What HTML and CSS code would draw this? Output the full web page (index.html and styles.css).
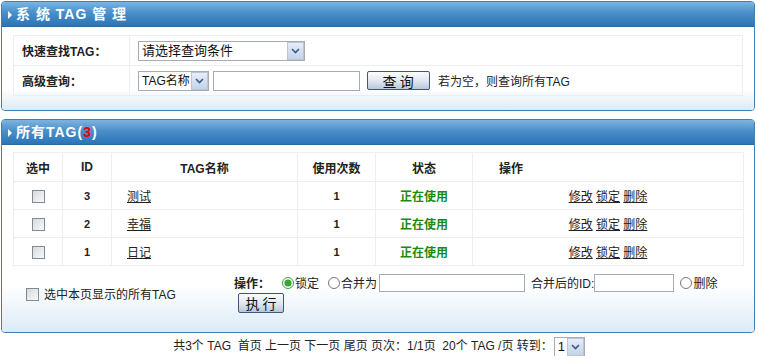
FILE: index.html
```html
<!DOCTYPE html>
<html lang="zh-CN">
<head>
    <meta charset="utf-8">
    <title>系统TAG管理</title>
    <link rel="stylesheet" href="styles.css">
</head>
<body>
    <div class="panel">
        <div class="panel-head"><span class="arrow"></span>系 统 TAG 管 理</div>
        <div class="panel-body search">
            <table class="grid">
                <tr>
                    <td class="label">快速查找TAG：</td>
                    <td>
                        <span class="sel sel-wide">
                            <select><option>请选择查询条件</option></select>
                            <span class="sel-btn"><svg width="9" height="6" viewBox="0 0 9 6"><path d="M1 1 L4.5 4.5 L8 1" fill="none" stroke="#3a5a88" stroke-width="1.6"/></svg></span>
                        </span>
                    </td>
                </tr>
                <tr>
                    <td class="label">高级查询：</td>
                    <td>
                        <span class="sel sel-small">
                            <select><option>TAG名称</option></select>
                            <span class="sel-btn"><svg width="9" height="6" viewBox="0 0 9 6"><path d="M1 1 L4.5 4.5 L8 1" fill="none" stroke="#3a5a88" stroke-width="1.6"/></svg></span>
                        </span>
                        <input type="text" class="txt txt-key">
                        <button type="button" class="btn btn-query">查 询</button>
                        <span class="hint">若为空，则查询所有TAG</span>
                    </td>
                </tr>
            </table>
        </div>
    </div>

    <div class="panel panel-last">
        <div class="panel-head"><span class="arrow"></span>所有TAG(<span class="red">3</span>)</div>
        <div class="panel-body list">
            <table class="grid tags">
                <colgroup>
                    <col class="w1"><col class="w2"><col class="w3"><col class="w4"><col class="w5"><col class="w6">
                </colgroup>
                <tr class="head">
                    <td>选中</td>
                    <td>ID</td>
                    <td>TAG名称</td>
                    <td>使用次数</td>
                    <td>状态</td>
                    <td class="op-head">操作</td>
                </tr>
                <tr>
                    <td><input type="checkbox" class="chk"></td>
                    <td class="num">3</td>
                    <td class="name"><a href="#">测试</a></td>
                    <td class="num">1</td>
                    <td class="ok">正在使用</td>
                    <td><a href="#">修改</a> <a href="#">锁定</a> <a href="#">删除</a></td>
                </tr>
                <tr>
                    <td><input type="checkbox" class="chk"></td>
                    <td class="num">2</td>
                    <td class="name"><a href="#">幸福</a></td>
                    <td class="num">1</td>
                    <td class="ok">正在使用</td>
                    <td><a href="#">修改</a> <a href="#">锁定</a> <a href="#">删除</a></td>
                </tr>
                <tr>
                    <td><input type="checkbox" class="chk"></td>
                    <td class="num">1</td>
                    <td class="name"><a href="#">日记</a></td>
                    <td class="num">1</td>
                    <td class="ok">正在使用</td>
                    <td><a href="#">修改</a> <a href="#">锁定</a> <a href="#">删除</a></td>
                </tr>
            </table>
            <div class="actions">
                <label class="all"><input type="checkbox" class="chk">选中本页显示的所有TAG</label>
                <div class="ops">
                    <div class="ops-line">
                        <b class="ops-title">操作：</b>
                        <label class="rad"><input type="radio" name="op" checked>锁定</label>
                        <label class="rad"><input type="radio" name="op">合并为</label>
                        <input type="text" class="txt txt-merge">
                        <span class="merge-id">合并后的ID:</span><input type="text" class="txt txt-id">
                        <label class="rad rad-del"><input type="radio" name="op">删除</label>
                    </div>
                    <button type="button" class="btn btn-run">执 行</button>
                </div>
            </div>
        </div>
    </div>

    <div class="pager">
        共3个 TAG&nbsp; 首页 上一页 下一页 尾页 页次：1/1页&nbsp; 20个 TAG /页 转到：<span class="sel sel-page">
            <select><option>1</option></select>
            <span class="sel-btn"><svg width="9" height="6" viewBox="0 0 9 6"><path d="M1 1 L4.5 4.5 L8 1" fill="none" stroke="#3a5a88" stroke-width="1.6"/></svg></span>
        </span>
    </div>
</body>
</html>
```

FILE: styles.css
```css
body {
    margin: 0;
    background: #fff;
    font: 12px "Liberation Sans", "Noto Sans CJK SC", sans-serif;
    color: #222;
}

.panel {
    width: 752px;
    margin: 1px 0 8px 1px;
    border: 1px solid #3f7fb2;
    border-radius: 4px;
    overflow: hidden;
}

.panel-last {
    margin-bottom: 0;
}

.panel-head {
    height: 24px;
    line-height: 24px;
    padding-left: 6px;
    background: linear-gradient(#7db4df, #4a8fca 45%, #2c74b6);
    color: #fff;
    font-weight: bold;
    font-size: 14px;
    letter-spacing: 1px;
    border-bottom: 1px solid #2a6aa3;
}

.arrow {
    display: inline-block;
    width: 0;
    height: 0;
    border-left: 4px solid #fff;
    border-top: 4px solid transparent;
    border-bottom: 4px solid transparent;
    margin-right: 4px;
    vertical-align: 0;
}

.red {
    color: #e00;
}

.panel-body {
    background: linear-gradient(#fff 75%, #dcebf7);
    padding: 8px 11px 0 11px;
}

.search {
    height: 75px;
}

.list {
    padding-top: 7px;
    height: 180px;
}

.grid {
    width: 730px;
    border-collapse: collapse;
}

.grid td {
    border: 1px solid #eceef0;
    padding: 0;
}

.search .grid td {
    height: 29px;
    padding-left: 8px;
}

.search .grid td.label {
    width: 107px;
    font-weight: bold;
    padding-left: 8px;
}

.sel {
    position: relative;
    display: inline-block;
    vertical-align: middle;
    height: 20px;
}

.sel select {
    appearance: none;
    -webkit-appearance: none;
    height: 20px;
    border: 1px solid #a5acb5;
    background: #fff;
    font: 12px "Liberation Sans", "Noto Sans CJK SC", sans-serif;
    color: #111;
    padding: 0 0 0 3px;
    margin: 0;
    border-radius: 0;
}

.sel-wide select {
    width: 167px;
    font-size: 13px;
}

.sel-small select {
    width: 71px;
}

.sel-page select {
    width: 31px;
    font-size: 13px;
}

.sel-btn {
    position: absolute;
    right: 1px;
    top: 1px;
    width: 15px;
    height: 16px;
    border: 1px solid #b8c6d8;
    background: linear-gradient(#e6eef8, #c3d3e8);
    display: flex;
    align-items: center;
    justify-content: center;
}

.txt {
    height: 18px;
    box-sizing: border-box;
    border: 1px solid #a5acb5;
    vertical-align: middle;
    margin: 0;
    padding: 0 2px;
}

.txt-key {
    width: 147px;
    height: 20px;
    margin-left: 1px;
}

.btn {
    font: 14px "Noto Sans CJK SC", sans-serif;
    color: #111;
    border: 1px solid #3d5878;
    border-radius: 2px;
    background: linear-gradient(#fbfcfe, #dfe6f0 55%, #b9c7da);
    padding: 0;
    line-height: 16px;
    vertical-align: middle;
}

.btn-query {
    width: 63px;
    height: 19px;
    margin-left: 3px;
}

.hint {
    margin-left: 5px;
    vertical-align: middle;
}

.tags {
    table-layout: fixed;
}

.tags .w1 { width: 49px; }
.tags .w2 { width: 49px; }
.tags .w3 { width: 186px; }
.tags .w4 { width: 78px; }
.tags .w5 { width: 97px; }
.tags .w6 { width: 271px; }

.tags td {
    height: 27px;
    text-align: center;
}

.tags tr.head td {
    height: 28px;
    font-weight: bold;
}

.tags td.name {
    text-align: left;
    padding-left: 15px;
}

.tags td.op-head {
    text-align: left;
    padding-left: 26px;
}

.num {
    font-weight: bold;
    font-size: 11px;
}

.ok {
    color: #1a8a12;
    font-weight: bold;
}

a {
    color: #222;
    text-decoration: underline;
}

.chk {
    appearance: none;
    -webkit-appearance: none;
    width: 13px;
    height: 13px;
    margin: 0;
    border: 1px solid #7d8a98;
    background: linear-gradient(135deg, #d6d9dc, #fafafa);
    vertical-align: middle;
}

.actions {
    display: flex;
    align-items: center;
    height: 54px;
}

.all {
    width: 208px;
    padding-left: 13px;
}

.all .chk {
    margin-right: 5px;
    vertical-align: -2px;
}

.ops {
    flex: 1;
}

.ops-line {
    display: flex;
    align-items: center;
    height: 18px;
    white-space: nowrap;
}

.ops-title {
    width: 48px;
}

.rad {
    display: inline-flex;
    align-items: center;
    margin-right: 2px;
}

.rad input {
    width: 12px;
    height: 12px;
    margin: 0 1px 0 0;
    accent-color: #3aa43a;
}

.rad + .rad {
    margin-left: 7px;
}

.txt-merge {
    width: 146px;
}

.merge-id {
    margin-left: 6px;
}

.txt-id {
    width: 80px;
}

.rad-del {
    margin-left: 6px;
}

.btn-run {
    width: 46px;
    height: 20px;
    margin: 1px 0 0 4px;
}

.pager {
    text-align: center;
    margin-top: 3px;
    height: 20px;
    line-height: 20px;
}

.sel-page {
    vertical-align: middle;
    margin-left: 1px;
}
```
